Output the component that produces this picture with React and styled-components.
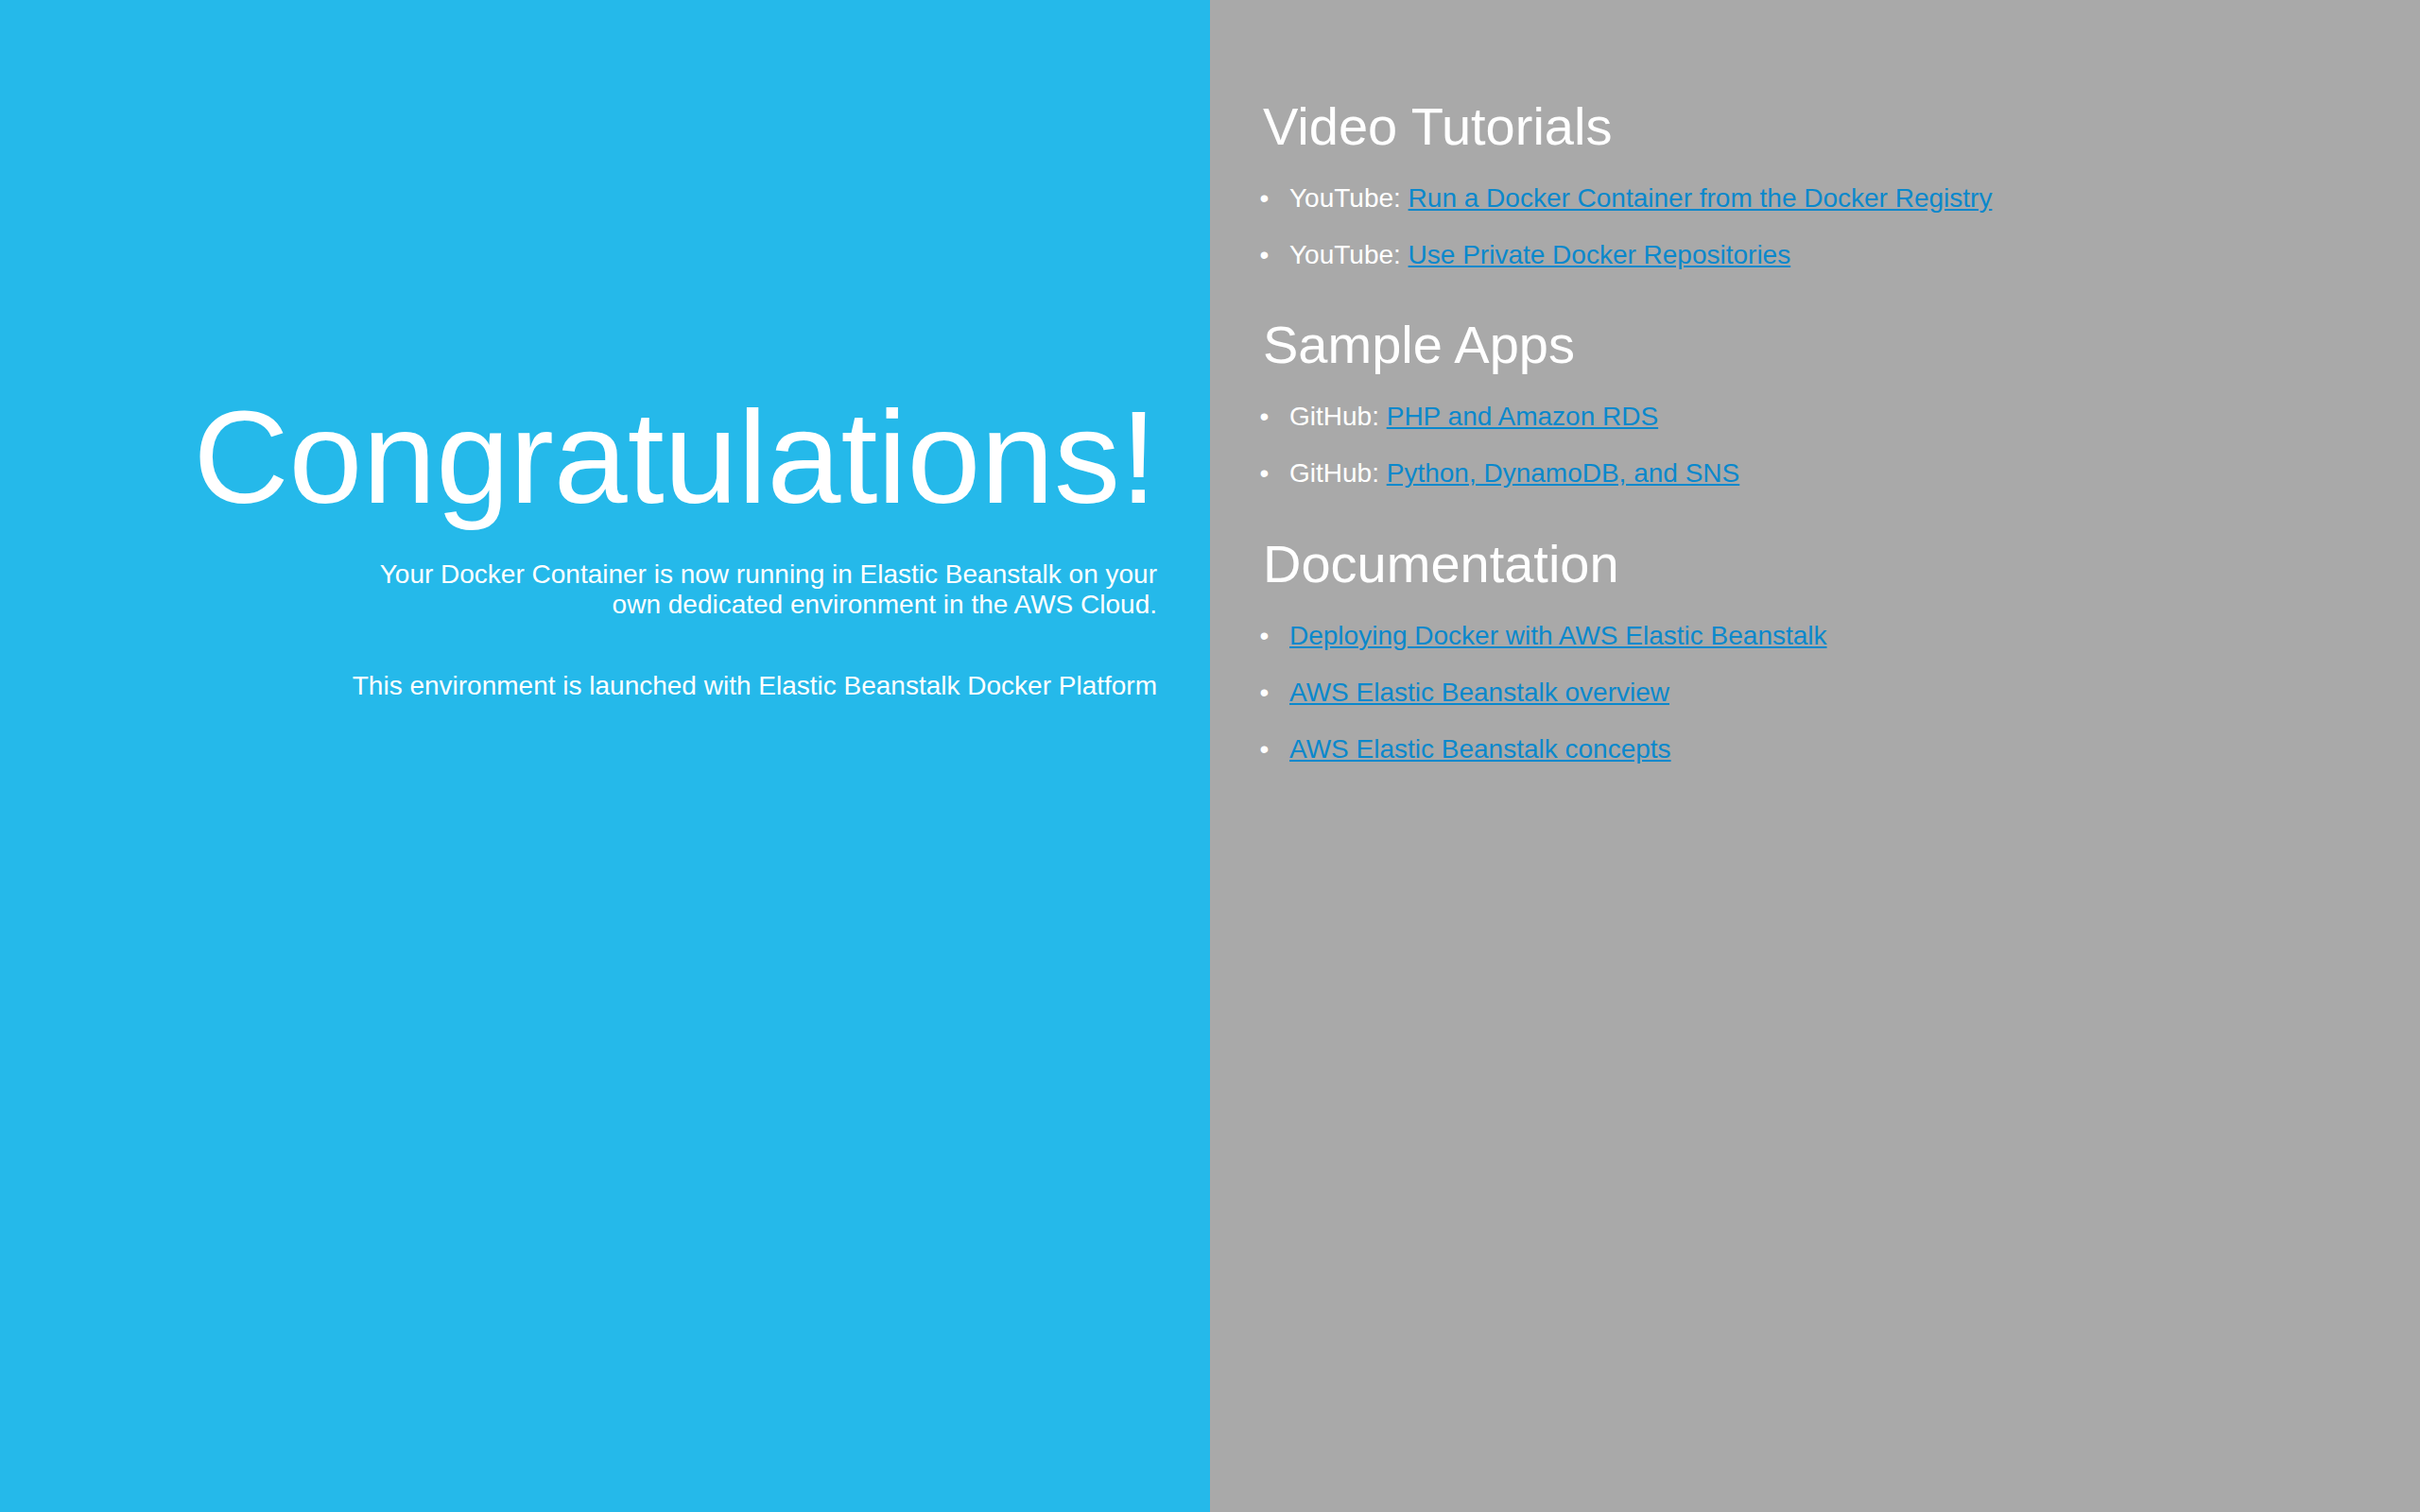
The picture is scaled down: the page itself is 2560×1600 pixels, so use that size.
import React from 'react'
import styled, { createGlobalStyle } from 'styled-components'

const GlobalStyle = createGlobalStyle`
  html, body {
    margin: 0;
    padding: 0;
    height: 100%;
  }
  body {
    color: #ffffff;
    background-color: #a9a9a9;
    font-family: "Liberation Sans", Arial, sans-serif;
    font-size: 28px;
  }
  #root {
    height: 100%;
  }
`

const Page = styled.main`
  display: grid;
  grid-template-columns: 1fr 1fr;
  min-height: 100vh;
`

const TextColumn = styled.section`
  background-color: #25b9ea;
  padding: 309px 56px 56px;
  display: flex;
  flex-direction: column;
  align-items: flex-end;
  text-align: right;
`

const LinksColumn = styled.section`
  background-color: #a9a9a9;
  padding: 54px 56px 56px;
`

const Title = styled.h1`
  font-size: 140px;
  font-weight: normal;
  margin: 94px 0 0;
`

const Paragraph = styled.p`
  width: 75%;
  margin: 27px 0;
`

const Heading = styled.h2`
  font-size: 56px;
  font-weight: normal;
  margin: 46.5px 0 0;
`

const List = styled.ul`
  padding-left: 28px;
  margin: 0;
`

const Item = styled.li`
  margin: 28px 0;

  &::marker {
    content: "\\2022\\2002\\00a0";
  }
`

const Link = styled.a`
  color: #0a88cc;
  text-decoration: underline;
`

const sections = [
  {
    title: 'Video Tutorials',
    items: [
      { label: 'YouTube:', text: 'Run a Docker Container from the Docker Registry' },
      { label: 'YouTube:', text: 'Use Private Docker Repositories' },
    ],
  },
  {
    title: 'Sample Apps',
    items: [
      { label: 'GitHub:', text: 'PHP and Amazon RDS' },
      { label: 'GitHub:', text: 'Python, DynamoDB, and SNS' },
    ],
  },
  {
    title: 'Documentation',
    items: [
      { text: 'Deploying Docker with AWS Elastic Beanstalk' },
      { text: 'AWS Elastic Beanstalk overview' },
      { text: 'AWS Elastic Beanstalk concepts' },
    ],
  },
]

const App = () => {
  return (
    <>
      <GlobalStyle />
      <Page>
        <TextColumn>
          <Title>Congratulations!</Title>
          <Paragraph>
            Your Docker Container is now running in Elastic Beanstalk on your own dedicated environment in the AWS Cloud.
          </Paragraph>
          <Paragraph>This environment is launched with Elastic Beanstalk Docker Platform</Paragraph>
        </TextColumn>

        <LinksColumn>
          {sections.map(section => (
            <div key={section.title}>
              <Heading>{section.title}</Heading>
              <List>
                {section.items.map(item => (
                  <Item key={item.text}>
                    {item.label && <>{item.label} </>}
                    <Link href="#">{item.text}</Link>
                  </Item>
                ))}
              </List>
            </div>
          ))}
        </LinksColumn>
      </Page>
    </>
  )
}

export default App
